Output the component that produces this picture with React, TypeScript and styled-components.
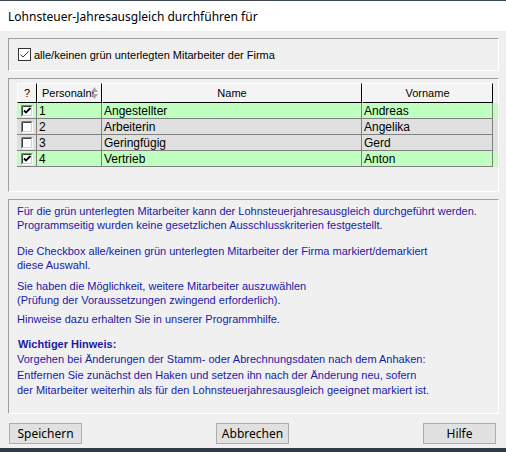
import * as React from 'react'
import styled, { createGlobalStyle } from 'styled-components'

const GlobalStyle = createGlobalStyle`
  html, body {
    margin: 0;
    padding: 0;
    background: #f0f0f0;
  }
`

const UI_FONT = `"Noto Sans", "Liberation Sans", sans-serif`
const GRID_FONT = `"Liberation Sans", "DejaVu Sans", sans-serif`

const Window = styled.div`
  width: 506px;
  height: 452px;
  box-sizing: border-box;
  display: flex;
  flex-direction: column;
  border-top: 1px solid #3a4654;
  border-bottom: 4px solid #2e3a44;
  background: #f0f0f0;
`

const TitleBar = styled.div`
  height: 30px;
  flex: none;
  display: flex;
  align-items: center;
  padding-left: 8px;
  background: #ffffff;
  font-family: ${UI_FONT};
  font-size: 12px;
  color: #000;
`

const Client = styled.div`
  flex: 1;
  display: flex;
  flex-direction: column;
  padding: 0 7px 0 8px;
`

const Panel = styled.div<{ $height: number }>`
  box-sizing: border-box;
  height: ${({ $height }) => $height}px;
  margin-top: 7px;
  border-top: 1px solid #a0a0a0;
  border-left: 1px solid #a0a0a0;
  border-bottom: 1px solid #ffffff;
  border-right: 1px solid #ffffff;
`

const SelectAllRow = styled.label`
  display: flex;
  align-items: center;
  gap: 3px;
  height: 100%;
  padding-left: 9px;
  font-family: ${GRID_FONT};
  font-size: 11px;
  color: #000;
`

const GridWrap = styled.div`
  padding: 4px 0 0 8px;
`

const COLUMNS = '20px 65px 260px 131px'

const HeaderRow = styled.div`
  display: grid;
  grid-template-columns: ${COLUMNS};
  height: 20px;
`

const HeaderCell = styled.div<{ $align?: 'left' | 'center' }>`
  position: relative;
  box-sizing: border-box;
  display: flex;
  align-items: center;
  justify-content: ${({ $align }) => ($align === 'left' ? 'flex-start' : 'center')};
  padding-left: ${({ $align }) => ($align === 'left' ? '4px' : '0')};
  background: #f4f4f4;
  border-top: 1px solid #ffffff;
  border-left: 1px solid #ffffff;
  border-right: 1px solid #000000;
  border-bottom: 1px solid #000000;
  font-family: ${GRID_FONT};
  font-size: 11px;
  color: #000;
  white-space: nowrap;
`

const SortIcon = styled.svg`
  position: absolute;
  right: 3px;
  top: 2px;
`

const DataRow = styled.div<{ $green: boolean }>`
  display: grid;
  grid-template-columns: ${COLUMNS};
  height: 16px;
  background: ${({ $green }) => ($green ? '#c0ffc0' : '#e0e0e0')};
`

const Cell = styled.div`
  box-sizing: border-box;
  display: flex;
  align-items: center;
  padding-left: 2px;
  border-right: 1px solid #808080;
  border-bottom: 1px solid #808080;
  font-family: ${GRID_FONT};
  font-size: 12px;
  color: #000;
  white-space: nowrap;
  overflow: hidden;
`

const CheckCell = styled(Cell)`
  justify-content: center;
  padding-left: 0;
`

const InfoBody = styled.div`
  padding: 4px 0 0 8px;
  font-family: ${GRID_FONT};
  font-size: 11px;
  color: #1a1aa8;
`

const Para = styled.p<{ $gap: number; $line?: number }>`
  margin: ${({ $gap }) => $gap}px 0 0 0;
  line-height: ${({ $line }) => $line ?? 14}px;
`

const Strong = styled.p<{ $gap: number }>`
  margin: ${({ $gap }) => $gap}px 0 0 1px;
  line-height: 15px;
  font-weight: bold;
`

const ButtonRow = styled.div`
  display: flex;
  justify-content: space-between;
  margin-top: 9px;
  padding: 0 3px 0 1px;
`

const Button = styled.button`
  width: 73px;
  height: 21px;
  box-sizing: border-box;
  padding: 0;
  background: #e1e1e1;
  border: 1px solid #adadad;
  font-family: ${UI_FONT};
  font-size: 12px;
  color: #000;
`

const ModernCheck = () => (
  <svg width="13" height="13" viewBox="0 0 13 13">
    <rect x="0.5" y="0.5" width="12" height="12" fill="#fff" stroke="#333" />
    <path d="M2.5 6.5 L5 9 L10.5 3.5" fill="none" stroke="#333" strokeWidth="1" />
  </svg>
)

const ClassicCheck = ({ checked }: { checked: boolean }) => (
  <svg width="12" height="12" viewBox="0 0 12 12">
    <rect x="0" y="0" width="12" height="12" fill="#ffffff" />
    <path d="M0.5 11.5 V0.5 H11.5" fill="none" stroke="#808080" />
    <path d="M1.5 10.5 V1.5 H10.5" fill="none" stroke="#404040" />
    <path d="M1.5 10.5 H10.5 V1.5" fill="none" stroke="#d4d0c8" />
    {checked && (
      <path d="M3 5.5 L5 7.5 L9.5 3" fill="none" stroke="#000" strokeWidth="1.8" />
    )}
  </svg>
)

const SortArrows = () => (
  <SortIcon width="7" height="14" viewBox="0 0 7 14">
    <path d="M3.5 1 L7 6 H0 Z" fill="#a8a8a8" />
    <path d="M0 8 H7 L3.5 13 Z" fill="#a8a8a8" />
  </SortIcon>
)

type Employee = {
  nr: number
  name: string
  vorname: string
  green: boolean
  checked: boolean
}

const employees: Employee[] = [
  { nr: 1, name: 'Angestellter', vorname: 'Andreas', green: true, checked: true },
  { nr: 2, name: 'Arbeiterin', vorname: 'Angelika', green: false, checked: false },
  { nr: 3, name: 'Geringfügig', vorname: 'Gerd', green: false, checked: false },
  { nr: 4, name: 'Vertrieb', vorname: 'Anton', green: true, checked: true },
]

export default function App() {
  return (
    <Window>
      <GlobalStyle />
      <TitleBar>Lohnsteuer-Jahresausgleich durchführen für</TitleBar>
      <Client>
        <Panel $height={33}>
          <SelectAllRow>
            <ModernCheck />
            alle/keinen grün unterlegten Mitarbeiter der Firma
          </SelectAllRow>
        </Panel>

        <Panel $height={114}>
          <GridWrap>
            <HeaderRow>
              <HeaderCell>?</HeaderCell>
              <HeaderCell $align="left">
                Personalnr
                <SortArrows />
              </HeaderCell>
              <HeaderCell>Name</HeaderCell>
              <HeaderCell>Vorname</HeaderCell>
            </HeaderRow>
            {employees.map((e) => (
              <DataRow key={e.nr} $green={e.green}>
                <CheckCell>
                  <ClassicCheck checked={e.checked} />
                </CheckCell>
                <Cell>{e.nr}</Cell>
                <Cell>{e.name}</Cell>
                <Cell>{e.vorname}</Cell>
              </DataRow>
            ))}
          </GridWrap>
        </Panel>

        <Panel $height={215}>
          <InfoBody>
            <Para $gap={0}>
              Für die grün unterlegten Mitarbeiter kann der Lohnsteuerjahresausgleich durchgeführt werden.
              <br />
              Programmseitig wurden keine gesetzlichen Ausschlusskriterien festgestellt.
            </Para>
            <Para $gap={12}>
              Die Checkbox alle/keinen grün unterlegten Mitarbeiter der Firma markiert/demarkiert
              <br />
              diese Auswahl.
            </Para>
            <Para $gap={7}>
              Sie haben die Möglichkeit, weitere Mitarbeiter auszuwählen
              <br />
              (Prüfung der Voraussetzungen zwingend erforderlich).
            </Para>
            <Para $gap={5}>Hinweise dazu erhalten Sie in unserer Programmhilfe.</Para>
            <Strong $gap={11}>Wichtiger Hinweis:</Strong>
            <Para $gap={0} $line={15.5}>
              Vorgehen bei Änderungen der Stamm- oder Abrechnungsdaten nach dem Anhaken:
              <br />
              Entfernen Sie zunächst den Haken und setzen ihn nach der Änderung neu, sofern
              <br />
              der Mitarbeiter weiterhin als für den Lohnsteuerjahresausgleich geeignet markiert ist.
            </Para>
          </InfoBody>
        </Panel>

        <ButtonRow>
          <Button>Speichern</Button>
          <Button>Abbrechen</Button>
          <Button>Hilfe</Button>
        </ButtonRow>
      </Client>
    </Window>
  )
}
